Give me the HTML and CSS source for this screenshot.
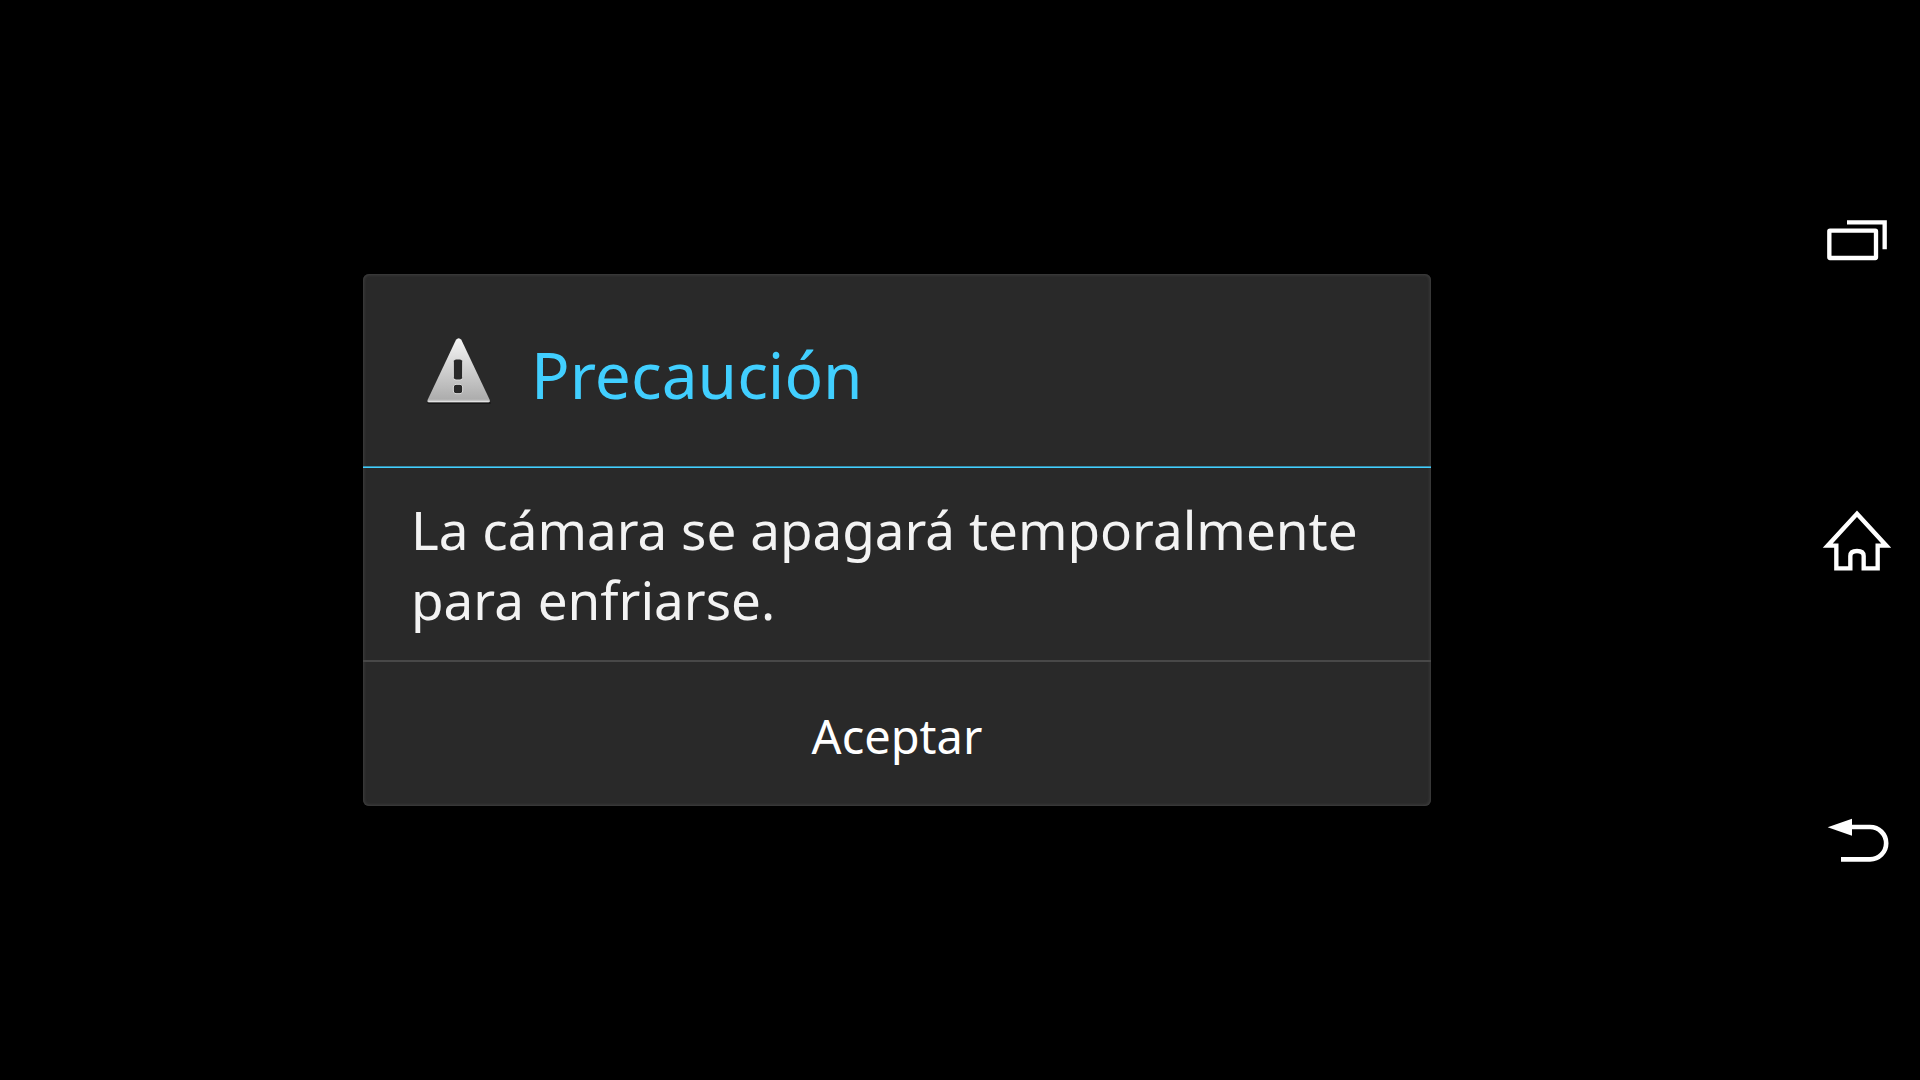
FILE: index.html
```html
<!DOCTYPE html>
<html lang="es">
<head>
<meta charset="utf-8">
<meta name="viewport" content="width=device-width, initial-scale=1">
<title>Precaución</title>
<link rel="stylesheet" href="styles.css">
</head>
<body>
<main class="stage">
  <section class="dialog" role="alertdialog" aria-labelledby="dialog-title" aria-describedby="dialog-message">
    <header class="dialog-header">
      <svg class="warning-icon" viewBox="0 0 270 270" aria-hidden="true">
        <defs>
          <linearGradient id="metal" x1="0" y1="0" x2="0" y2="1">
            <stop offset="0" stop-color="#f6f6f6"/>
            <stop offset="0.5" stop-color="#cfcfcf"/>
            <stop offset="0.95" stop-color="#adadad"/>
            <stop offset="1" stop-color="#dedede"/>
          </linearGradient>
        </defs>
        <path d="M40 231H225" stroke="#111" stroke-width="5" stroke-linecap="round"/>
        <path d="M123 41Q131 32 139 41L224 221Q227 229 219 229H43Q35 229 38 221Z" fill="url(#metal)"/>
        <path d="M42 227H220" stroke="#e4e4e4" stroke-width="3" stroke-linecap="round"/>
        <rect x="115" y="99" width="28" height="63" rx="8" fill="#292929" stroke="#dadada" stroke-width="3"/>
        <rect x="115" y="175" width="28" height="28" rx="8" fill="#292929" stroke="#dadada" stroke-width="3"/>
      </svg>
      <h1 class="dialog-title" id="dialog-title">Precaución</h1>
    </header>
    <p class="dialog-message" id="dialog-message">La cámara se apagará temporalmente para enfriarse.</p>
    <button class="dialog-button" type="button">Aceptar</button>
  </section>
</main>
<nav class="navbar" aria-label="Navegación">
  <button class="nav-button" type="button" aria-label="Recientes">
    <svg class="nav-icon" viewBox="21 -4 240 240" aria-hidden="true">
      <rect x="58" y="91" width="140" height="82" rx="2" fill="none" stroke="#fff" stroke-width="13"/>
      <path d="M111 66H224V147" fill="none" stroke="#fff" stroke-width="13"/>
    </svg>
  </button>
  <button class="nav-button" type="button" aria-label="Inicio">
    <svg class="nav-icon" viewBox="21 0 240 240" aria-hidden="true">
      <path d="M141 41L53 137H79V205H121V168Q121 153 141 153Q161 153 161 168V205H203V137H229Z" fill="none" stroke="#fff" stroke-width="13"/>
    </svg>
  </button>
  <button class="nav-button" type="button" aria-label="Atrás">
    <svg class="nav-icon" viewBox="21 -11 240 240" aria-hidden="true">
      <path d="M53 68L126 42V93Z" fill="#fff"/>
      <path d="M120 67H180A48 48 0 0 1 180 164H93" fill="none" stroke="#fff" stroke-width="14"/>
    </svg>
  </button>
</nav>
</body>
</html>
```
FILE: styles.css
```css
* {
  box-sizing: border-box;
}

body {
  margin: 0;
  min-height: 100vh;
  display: flex;
  background: #000;
  color: #f3f3f3;
  font-family: "Noto Sans", "Open Sans", sans-serif;
}

.stage {
  flex: 1;
  display: flex;
  align-items: center;
  justify-content: center;
  padding: 24px;
}

.dialog {
  width: 100%;
  max-width: 1068px;
  overflow: hidden;
  border-radius: 6px;
  background: #292929;
  box-shadow: inset 0 0 3px 1px #404040;
}

.dialog-header {
  display: flex;
  align-items: center;
  gap: 26px;
  min-height: 194px;
  padding: 0 52px;
  border-bottom: 1px solid #41cfff;
  box-shadow: inset 0 -1px #388ca8;
}

.warning-icon {
  flex: none;
  width: 90px;
  height: 90px;
}

.dialog-title {
  margin: 0;
  padding-top: 8px;
  color: #41cfff;
  font-size: 64px;
  font-weight: 400;
  line-height: 80px;
}

.dialog-message {
  margin: 0;
  padding: 27px 48px 25px;
  font-size: 53px;
  line-height: 70px;
}

.dialog-button {
  display: block;
  width: 100%;
  padding: 39px 48px 35px;
  border: 0;
  border-top: 2px solid #484848;
  background: transparent;
  color: #fff;
  font: inherit;
  font-size: 47px;
  line-height: 70px;
  cursor: pointer;
}

.navbar {
  flex: none;
  width: 126px;
  display: flex;
  flex-direction: column;
  padding: 88px 0;
}

.nav-button {
  flex: 1;
  display: flex;
  align-items: center;
  justify-content: center;
  padding: 0;
  border: 0;
  background: transparent;
  cursor: pointer;
}

.nav-icon {
  width: 80px;
  height: 80px;
}
```
